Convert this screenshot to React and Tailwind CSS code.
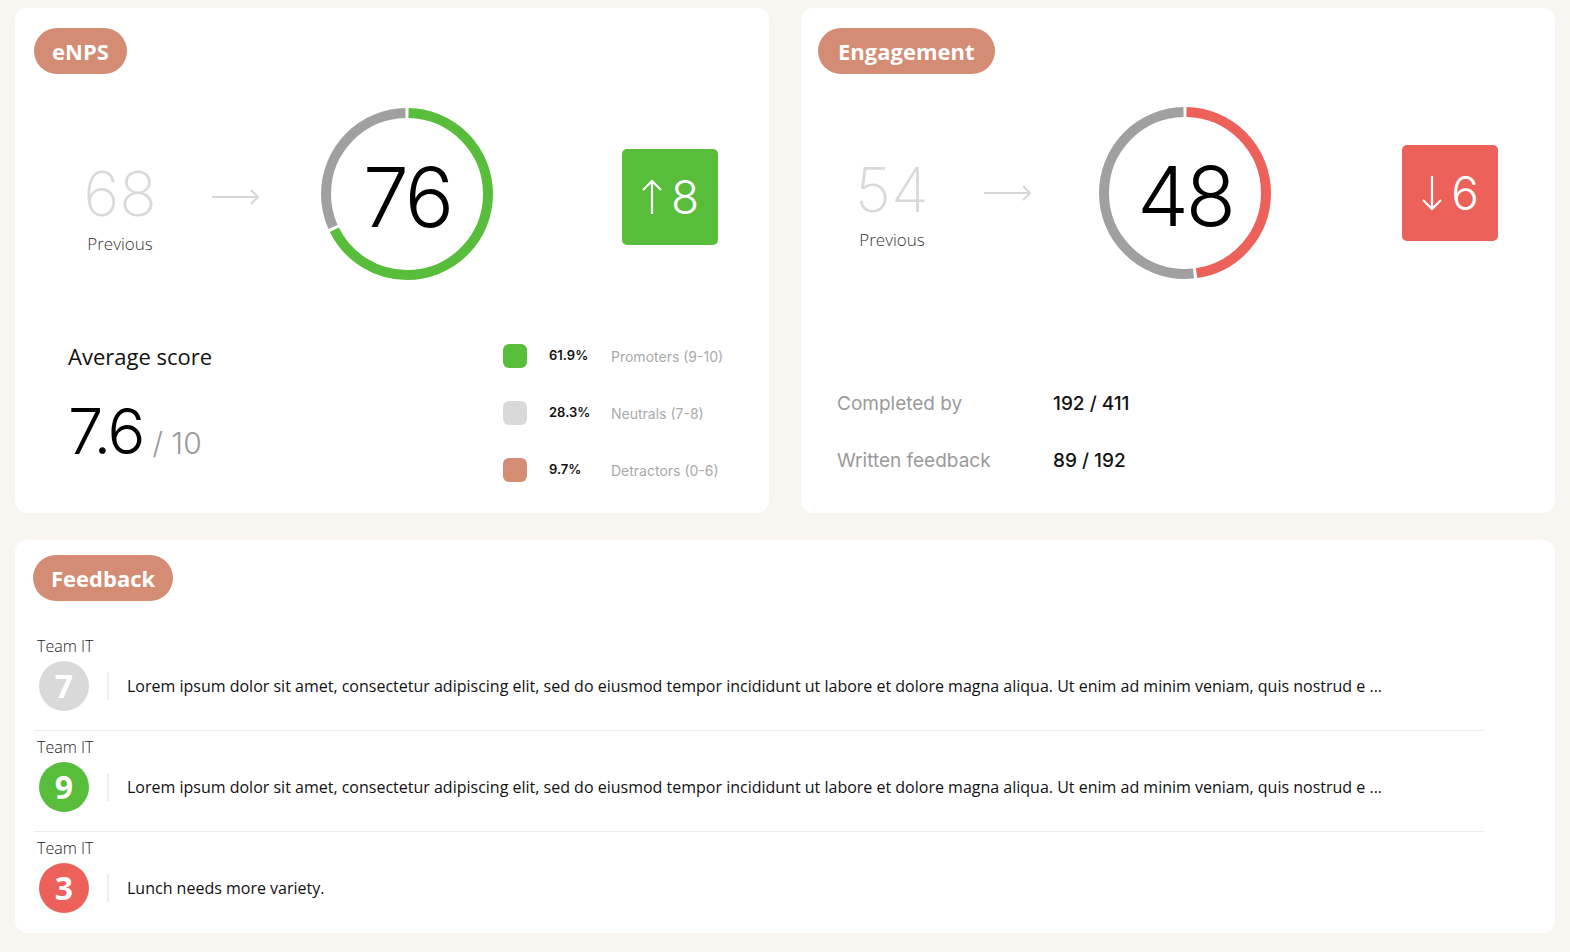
import React from 'react';

const GREEN = '#58bd3a';
const RED = '#ec615a';

// pill heading on top of every card
const Pill = ({ children, className = '' }) => (
  <div className={`inline-flex items-center h-[46px] rounded-full bg-[#d48c74] text-white font-bold font-['Open_Sans',sans-serif] ${className}`}>
    {children}
  </div>
);

const ArrowRight = () => (
  <svg width="48" height="16" viewBox="0 0 48 16" fill="none" stroke="#d6d6d6" strokeWidth="2">
    <line x1="0" y1="8" x2="46" y2="8" />
    <polyline points="39,1 46,8 39,15" />
  </svg>
);

const ArrowUp = () => (
  <svg width="22" height="36" viewBox="0 0 22 36" fill="none" stroke="white" strokeWidth="2.2">
    <line x1="11" y1="2" x2="11" y2="35" />
    <polyline points="2,11 11,2 20,11" />
  </svg>
);

const ArrowDown = () => (
  <svg width="22" height="36" viewBox="0 0 22 36" fill="none" stroke="white" strokeWidth="2.2">
    <line x1="11" y1="1" x2="11" y2="34" />
    <polyline points="2,25 11,34 20,25" />
  </svg>
);

const Gauge = ({ value, pct, color }) => {
  const gap = 0.6;
  return (
    <div className="relative w-[172px] h-[172px] shrink-0">
      <svg width="172" height="172" viewBox="0 0 172 172">
        <g transform="rotate(-90 86 86)">
          <circle cx="86" cy="86" r="81" fill="none" stroke={color} strokeWidth="10" pathLength="100"
            strokeDasharray={`${pct - gap} ${100 - pct + gap}`} strokeDashoffset={-gap / 2} />
          <circle cx="86" cy="86" r="81" fill="none" stroke="#a0a0a0" strokeWidth="10" pathLength="100"
            strokeDasharray={`${100 - pct - gap} ${pct + gap}`} strokeDashoffset={-(pct + gap / 2)} />
        </g>
      </svg>
      <div className="absolute inset-0 pt-[7px] flex items-center justify-center font-['Inter',sans-serif] font-light text-[82px] leading-none tracking-[-3px] text-black">
        {value}
      </div>
    </div>
  );
};

const Badge = ({ up, value, color, className = '' }) => (
  <div className={`w-[96px] h-[96px] rounded-[5px] flex items-center justify-center gap-[8px] ${className}`} style={{ background: color }}>
    {up ? <ArrowUp /> : <ArrowDown />}
    <span className="font-['Inter',sans-serif] font-light text-[46px] leading-none text-white">{value}</span>
  </div>
);

const TopRow = ({ prev, value, pct, color, up, diff, padLeft, prevTop, gaugeGap, badgeGap, arrowNudge, badgeNudge }) => (
  <div className={`flex items-center h-[172px] ${padLeft}`}>
    <div className={`w-[100px] self-start flex flex-col items-center ${prevTop}`}>
      <span className="font-['Inter',sans-serif] font-extralight text-[62px] leading-none text-[#d9d9d9]">{prev}</span>
      <span className="mt-[7px] font-['Open_Sans',sans-serif] font-light text-[17px] leading-6 text-[#333]">Previous</span>
    </div>
    <div className={`ml-[42px] ${arrowNudge}`}>
      <ArrowRight />
    </div>
    <div className={gaugeGap}>
      <Gauge value={value} pct={pct} color={color} />
    </div>
    <Badge up={up} value={diff} color={color} className={`${badgeGap} ${badgeNudge}`} />
  </div>
);

const legend = [
  { color: GREEN, pct: '61.9%', label: 'Promoters (9-10)' },
  { color: '#d9d9d9', pct: '28.3%', label: 'Neutrals (7-8)' },
  { color: '#d48c74', pct: '9.7%', label: 'Detractors (0-6)' },
];

const feedback = [
  { score: 7, color: '#d9d9d9', text: 'Lorem ipsum dolor sit amet, consectetur adipiscing elit, sed do eiusmod tempor incididunt ut labore et dolore magna aliqua. Ut enim ad minim veniam, quis nostrud e ...' },
  { score: 9, color: GREEN, text: 'Lorem ipsum dolor sit amet, consectetur adipiscing elit, sed do eiusmod tempor incididunt ut labore et dolore magna aliqua. Ut enim ad minim veniam, quis nostrud e ...' },
  { score: 3, color: RED, text: 'Lunch needs more variety.' },
];

export default function App() {
  return (
    <div className="w-[1570px] h-[952px] bg-[#f9f6f1] pl-[15px] pr-[15px] pt-[8px] font-['Open_Sans',sans-serif]">
      {/* top cards */}
      <div className="flex gap-[32px]">
        {/* eNPS */}
        <div className="w-[754px] h-[505px] bg-white rounded-xl pt-5 px-[19px]">
          <Pill className="px-[18px] text-[22px]">eNPS</Pill>
          <div className="mt-[34px] -ml-[19px]">
            <TopRow prev="68" value="76" pct={68} color={GREEN} up diff="8"
              padLeft="pl-[55px]" prevTop="mt-[55px]" gaugeGap="ml-[61px]" badgeGap="ml-[129px]"
              arrowNudge="mt-[6px]" badgeNudge="mt-[5px]" />
          </div>
          <div className="mt-[64px] flex items-start">
            <div className="ml-[34px] w-[435px]">
              <div className="text-[22px] leading-6 text-[#111]">Average score</div>
              <div className="mt-[32px] flex items-baseline font-['Inter',sans-serif] font-light">
                <span className="text-[63px] leading-none text-black tracking-[-2px]">7.6</span>
                <span className="ml-[9px] text-[30px] leading-none text-[#9a9a9a]">/ 10</span>
              </div>
            </div>
            <div className="flex flex-col gap-[33px] font-['Inter',sans-serif]">
              {legend.map((l) => (
                <div key={l.label} className="flex items-center h-6">
                  <div className="w-6 h-6 rounded-[6px]" style={{ background: l.color }} />
                  <span className="ml-[22px] w-[62px] text-[13px] font-semibold text-[#111]">{l.pct}</span>
                  <span className="text-[14px] text-[#aaaaaa]">{l.label}</span>
                </div>
              ))}
            </div>
          </div>
        </div>

        {/* Engagement */}
        <div className="w-[754px] h-[505px] bg-white rounded-xl pt-5 px-[17px]">
          <Pill className="px-[20px] text-[22px]">Engagement</Pill>
          <div className="mt-[33px] -ml-[17px]">
            <TopRow prev="54" value="48" pct={48} color={RED} up={false} diff="6"
              padLeft="pl-[41px]" prevTop="mt-[52px]" gaugeGap="ml-[67px]" badgeGap="ml-[131px]"
              arrowNudge="mt-0" badgeNudge="mt-0" />
          </div>
          <div className="mt-[111px] ml-[19px] flex flex-col gap-[29px] font-['Inter',sans-serif] text-[19px] leading-7">
            <div className="flex">
              <span className="w-[216px] text-[#9a9a9a]">Completed by</span>
              <span className="font-medium text-[#111]">192 / 411</span>
            </div>
            <div className="flex">
              <span className="w-[216px] text-[#9a9a9a]">Written feedback</span>
              <span className="font-medium text-[#111]">89 / 192</span>
            </div>
          </div>
        </div>
      </div>

      {/* Feedback */}
      <div className="mt-[27px] w-[1540px] h-[393px] bg-white rounded-xl pt-[15px] pl-[18px]">
        <Pill className="px-[18px] text-[22px]">Feedback</Pill>
        <div className="mt-[29px] w-[1449px] ml-[1px]">
          {feedback.map((f, i) => (
            <div key={i} className={`pt-[6px] pb-[19px] ${i < feedback.length - 1 ? 'border-b border-[#ececec]' : ''}`}>
              <div className="pl-[3px] h-5 text-[16px] leading-5 font-light text-[#222]">Team IT</div>
              <div className="mt-[5px] flex items-center pl-[5px]">
                <div className="w-[50px] h-[50px] rounded-full flex items-center justify-center text-white text-[32px] font-bold leading-none" style={{ background: f.color }}>
                  {f.score}
                </div>
                <div className="ml-[18px] w-[2px] h-7 bg-[#eeeeee]" />
                <p className="ml-[18px] text-[16px] text-[#111]">{f.text}</p>
              </div>
            </div>
          ))}
        </div>
      </div>
    </div>
  );
}
